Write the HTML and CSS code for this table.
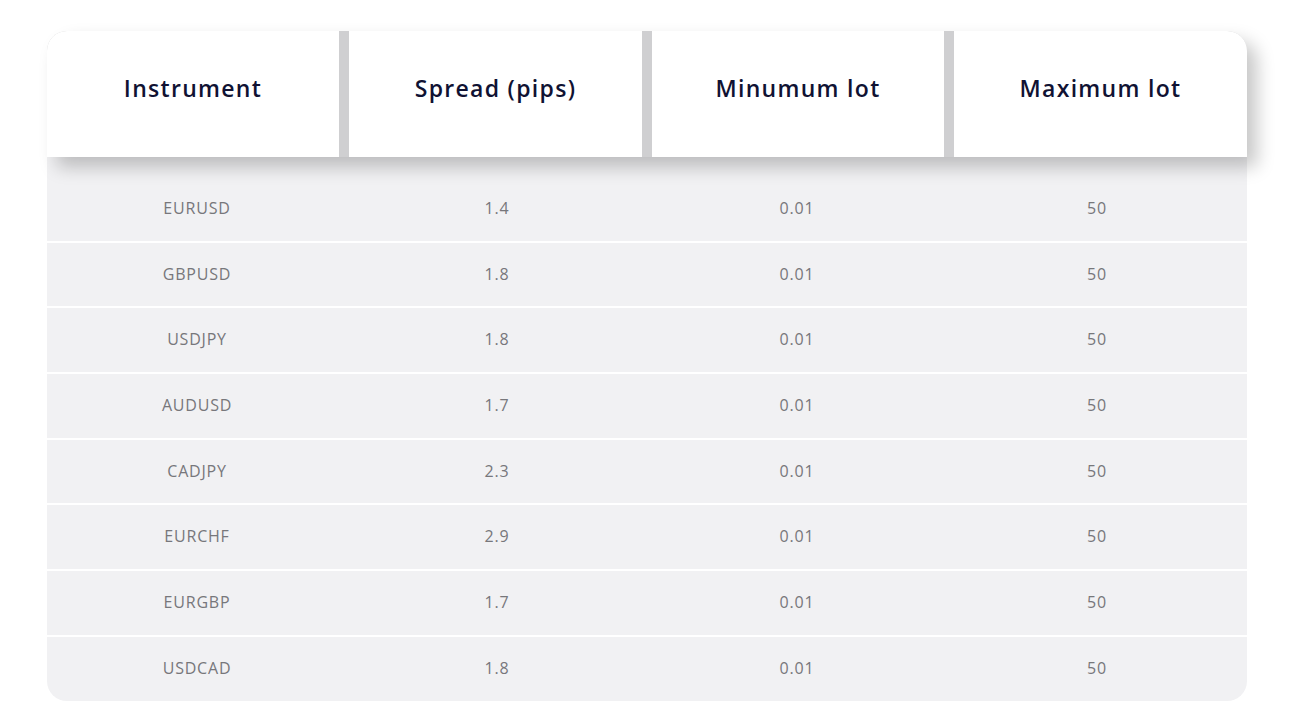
FILE: index.html
```html
<!DOCTYPE html>
<html>
<head>
<meta charset="utf-8">
<link rel="stylesheet" href="styles.css">
</head>
<body>
<div class="table">
  <div class="thead">
    <div class="th">Instrument</div>
    <div class="th">Spread (pips)</div>
    <div class="th">Minumum lot</div>
    <div class="th">Maximum lot</div>
  </div>
  <div class="tbody">
    <div class="tr"><div>EURUSD</div><div>1.4</div><div>0.01</div><div>50</div></div>
    <div class="tr"><div>GBPUSD</div><div>1.8</div><div>0.01</div><div>50</div></div>
    <div class="tr"><div>USDJPY</div><div>1.8</div><div>0.01</div><div>50</div></div>
    <div class="tr"><div>AUDUSD</div><div>1.7</div><div>0.01</div><div>50</div></div>
    <div class="tr"><div>CADJPY</div><div>2.3</div><div>0.01</div><div>50</div></div>
    <div class="tr"><div>EURCHF</div><div>2.9</div><div>0.01</div><div>50</div></div>
    <div class="tr"><div>EURGBP</div><div>1.7</div><div>0.01</div><div>50</div></div>
    <div class="tr"><div>USDCAD</div><div>1.8</div><div>0.01</div><div>50</div></div>
  </div>
</div>
</body>
</html>
```
FILE: styles.css
```css
html, body {
  margin: 0;
  padding: 0;
  background: #ffffff;
}
body {
  padding: 31px 0 0 47px;
  font-family: "Open Sans", "DejaVu Sans", sans-serif;
}
.table {
  width: 1200px;
}
.thead {
  position: relative;
  z-index: 2;
  display: grid;
  grid-template-columns: 292px 293px 292px 293px;
  column-gap: 10px;
  height: 126px;
  background: #cfcfd1;
  border-radius: 20px 20px 0 0;
  box-shadow: 10px 10px 18px rgba(0, 0, 0, 0.22);
}
.th {
  background: #ffffff;
  display: flex;
  align-items: center;
  justify-content: center;
  font-size: 23px;
  font-weight: 600;
  color: #101233;
  letter-spacing: 1.3px;
  padding-bottom: 12px;
}
.th:first-child {
  border-top-left-radius: 20px;
}
.th:last-child {
  border-top-right-radius: 20px;
}
.tbody {
  position: relative;
  z-index: 1;
  padding-top: 20px;
  background: #f1f1f3;
  border-radius: 0 0 20px 20px;
  overflow: hidden;
}
.tr {
  display: grid;
  grid-template-columns: repeat(4, 300px);
  height: 63.7px;
  align-items: center;
  border-bottom: 2px solid #ffffff;
}
.tr:last-child {
  border-bottom: none;
}
.tr > div {
  text-align: center;
  font-size: 16px;
  color: #77777b;
  letter-spacing: 0.8px;
  padding-bottom: 2px;
}
```
